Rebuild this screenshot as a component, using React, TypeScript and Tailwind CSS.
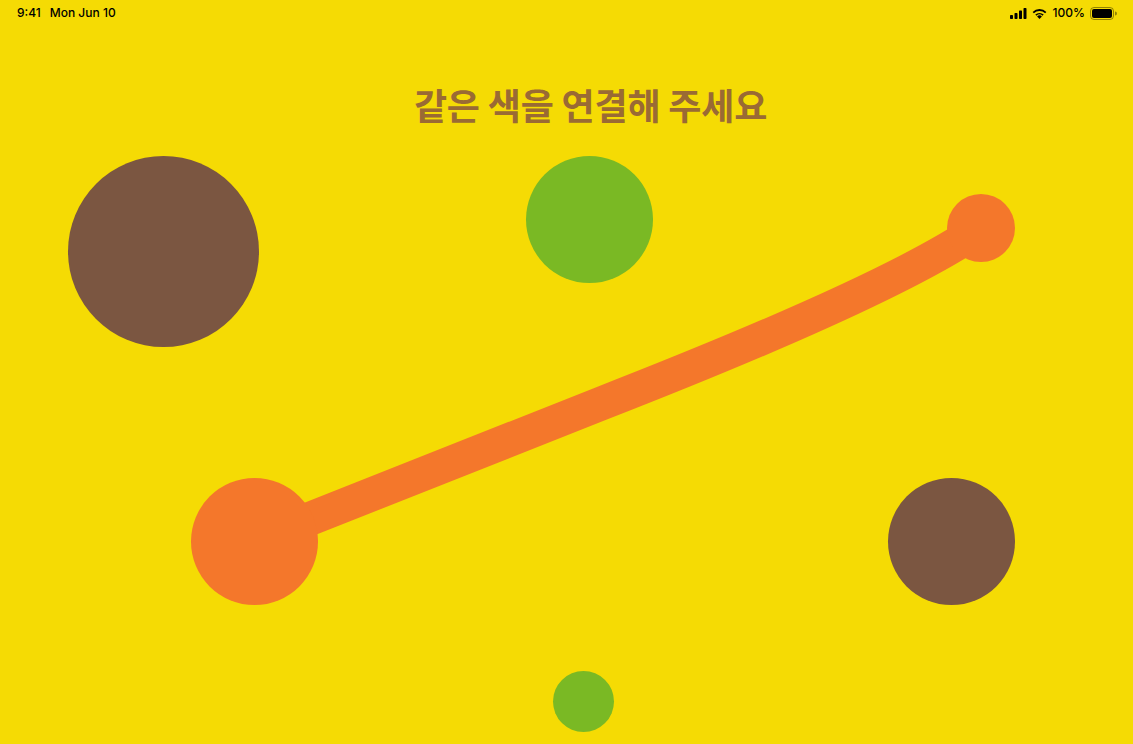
import React from "react";

const circles = [
  { x: 163.5, y: 251.5, r: 95.5, c: "bg-[#7b5641]" },
  { x: 589.5, y: 219.5, r: 63.5, c: "bg-[#7ab924]" },
  { x: 951.5, y: 541.5, r: 63.5, c: "bg-[#7b5641]" },
  { x: 583.5, y: 701.5, r: 30.5, c: "bg-[#7ab924]" },
  { x: 254.5, y: 541.5, r: 63.5, c: "bg-[#f4772b]" },
  { x: 981, y: 228, r: 34, c: "bg-[#f4772b]" },
];

export default function App() {
  return (
    <div className="relative w-[1133px] h-[744px] overflow-hidden bg-[#f5db04]" style={{ fontFamily: "Inter, 'Noto Sans CJK KR', sans-serif" }}>
      <div className="flex items-center justify-between h-[26px] pl-[17px] pr-[16px] text-[12px] font-medium text-black">
        <div className="flex gap-[9px]">
          <span>9:41</span>
          <span>Mon Jun 10</span>
        </div>
        <div className="flex items-center gap-[5px]">
          <svg width="17" height="11" viewBox="0 0 17 11">
            <rect x="0" y="7" width="3" height="4" rx="0.7" fill="#000" />
            <rect x="4.5" y="5" width="3" height="6" rx="0.7" fill="#000" />
            <rect x="9" y="2.5" width="3" height="8.5" rx="0.7" fill="#000" />
            <rect x="13.5" y="0" width="3" height="11" rx="0.7" fill="#000" />
          </svg>
          <svg width="15" height="11" viewBox="0 0 15 11">
            <path d="M7.5 11 L9.9 8.5 A3.4 3.4 0 0 0 5.1 8.5 Z" fill="#000" />
            <path d="M3.3 6.6 A6 6 0 0 1 11.7 6.6 L10.5 7.8 A4.3 4.3 0 0 0 4.5 7.8 Z" fill="#000" />
            <path d="M0.6 3.9 A9.8 9.8 0 0 1 14.4 3.9 L13.1 5.2 A8 8 0 0 0 1.9 5.2 Z" fill="#000" />
          </svg>
          <span className="ml-[1px]">100%</span>
          <svg width="27" height="13" viewBox="0 0 27 13">
            <rect x="0.5" y="0.5" width="23" height="12" rx="3.5" fill="none" stroke="#000" strokeOpacity="0.4" />
            <rect x="2" y="2" width="20" height="9" rx="2" fill="#000" />
            <path d="M25 4.5 A2 2 0 0 1 25 8.5 Z" fill="#000" fillOpacity="0.4" />
          </svg>
        </div>
      </div>

      <div className="flex justify-center pl-[48px] mt-[53px]">
        <h1 className="text-[36px] font-bold leading-[50px] text-[#9a6a34] tracking-[-0.2px]" style={{ fontFamily: "'Noto Sans CJK KR', sans-serif" }}>
          같은 색을 연결해 주세요
        </h1>
      </div>

      <svg className="absolute left-0 top-0" width="1133" height="744" viewBox="0 0 1133 744">
        <path d="M254 541 L600 404 Q892.6 289.9 981 228" fill="none" stroke="#f4772b" strokeWidth="34" strokeLinecap="butt" strokeLinejoin="round" />
      </svg>

      {circles.map((c, i) => (
        <div
          key={i}
          className={`absolute rounded-full ${c.c}`}
          style={{ left: c.x - c.r, top: c.y - c.r, width: c.r * 2, height: c.r * 2 }}
        />
      ))}
    </div>
  );
}
